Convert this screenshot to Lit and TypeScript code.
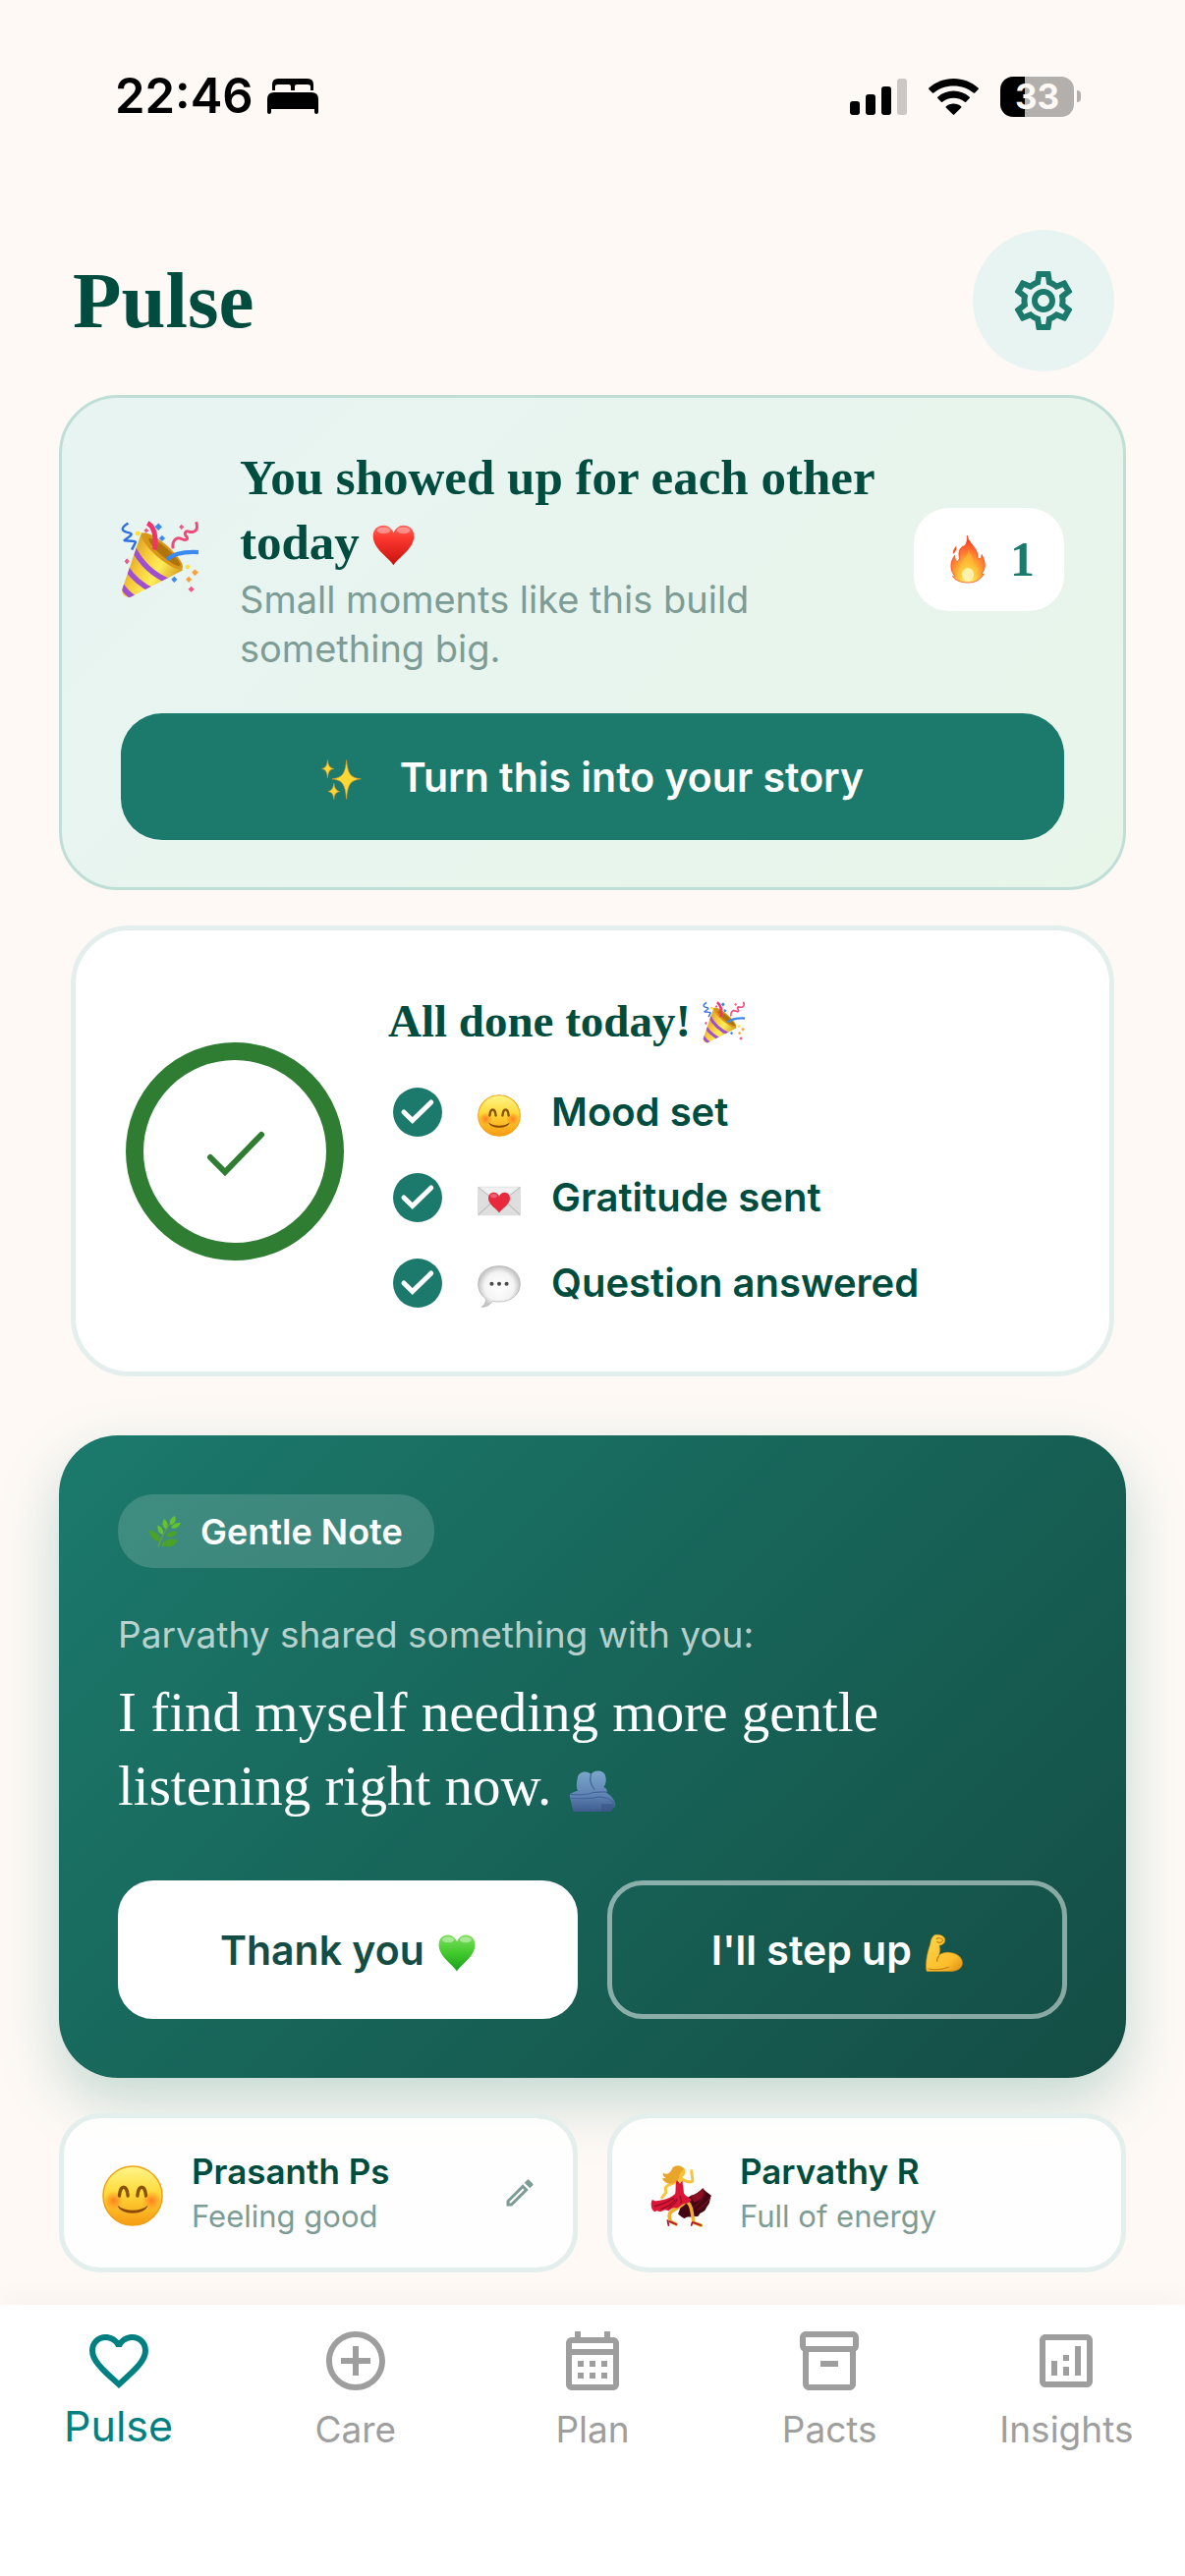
import { LitElement, html, svg, css, type SVGTemplateResult } from "lit";
import { customElement, property } from "lit/decorators.js";
import { classMap } from "lit/directives/class-map.js";

const ICONS: Record<string, SVGTemplateResult> = {
  settings: svg`<path d="M19.43 12.98c.04-.32.07-.64.07-.98 0-.34-.03-.66-.07-.98l2.11-1.65c.19-.15.24-.42.12-.64l-2-3.46c-.09-.16-.26-.25-.44-.25-.06 0-.12.01-.17.03l-2.49 1c-.52-.4-1.08-.73-1.69-.98l-.38-2.65C14.46 2.18 14.25 2 14 2h-4c-.25 0-.46.18-.49.42l-.38 2.65c-.61.25-1.17.59-1.69.98l-2.49-1c-.06-.02-.12-.03-.18-.03-.17 0-.34.09-.43.25l-2 3.46c-.13.22-.07.49.12.64l2.11 1.65c-.04.32-.07.65-.07.98 0 .33.03.66.07.98l-2.11 1.65c-.19.15-.24.42-.12.64l2 3.46c.09.16.26.25.44.25.06 0 .12-.01.17-.03l2.49-1c.52.4 1.08.73 1.69.98l.38 2.65c.03.24.24.42.49.42h4c.25 0 .46-.18.49-.42l.38-2.65c.61-.25 1.17-.59 1.69-.98l2.49 1c.06.02.12.03.18.03.17 0 .34-.09.43-.25l2-3.46c.12-.22.07-.49-.12-.64l-2.11-1.65zm-1.98-1.71c.04.31.05.52.05.73 0 .21-.02.43-.05.73l-.14 1.13.89.7 1.08.84-.7 1.21-1.27-.51-1.04-.42-.9.68c-.43.32-.84.56-1.25.73l-1.06.43-.16 1.13-.2 1.35h-1.4l-.19-1.35-.16-1.13-1.06-.43c-.43-.18-.83-.41-1.23-.71l-.91-.7-1.06.43-1.27.51-.7-1.21 1.08-.84.89-.7-.14-1.13c-.03-.31-.05-.54-.05-.74s.02-.43.05-.73l.14-1.13-.89-.7-1.08-.84.7-1.21 1.27.51 1.04.42.9-.68c.43-.32.84-.56 1.25-.73l1.06-.43.16-1.13.2-1.35h1.39l.19 1.35.16 1.13 1.06.43c.43.18.83.41 1.23.71l.91.7 1.06-.43 1.27-.51.7 1.21-1.07.85-.89.7.14 1.13zM12 8c-2.21 0-4 1.79-4 4s1.79 4 4 4 4-1.79 4-4-1.79-4-4-4zm0 6c-1.1 0-2-.9-2-2s.9-2 2-2 2 .9 2 2-.9 2-2 2z"/>`,
  heart: svg`<path d="M16.5 3c-1.74 0-3.41.81-4.5 2.09C10.91 3.81 9.24 3 7.5 3 4.42 3 2 5.42 2 8.5c0 3.78 3.4 6.86 8.55 11.54L12 21.35l1.45-1.32C18.6 15.36 22 12.28 22 8.5 22 5.42 19.58 3 16.5 3zm-4.4 15.55l-.1.1-.1-.1C7.14 14.24 4 11.39 4 8.5 4 6.5 5.5 5 7.5 5c1.54 0 3.04.99 3.57 2.36h1.87C13.46 5.99 14.96 5 16.5 5c2 0 3.5 1.5 3.5 3.5 0 2.89-3.14 5.74-7.9 10.05z"/>`,
  plus: svg`<path d="M13 7h-2v4H7v2h4v4h2v-4h4v-2h-4V7zm-1-5C6.48 2 2 6.48 2 12s4.48 10 10 10 10-4.48 10-10S17.52 2 12 2zm0 18c-4.41 0-8-3.59-8-8s3.59-8 8-8 8 3.59 8 8-3.59 8-8 8z"/>`,
  calendar: svg`<path d="M19 4h-1V2h-2v2H8V2H6v2H5c-1.11 0-1.99.9-1.99 2L3 20c0 1.1.89 2 2 2h14c1.1 0 2-.9 2-2V6c0-1.1-.9-2-2-2zm0 16H5V10h14v10zm0-12H5V6h14v2zM9 14H7v-2h2v2zm4 0h-2v-2h2v2zm4 0h-2v-2h2v2zm-8 4H7v-2h2v2zm4 0h-2v-2h2v2zm4 0h-2v-2h2v2z"/>`,
  box: svg`<path d="M20 2H4c-1 0-2 .9-2 2v3.01c0 .72.43 1.34 1 1.69V20c0 1.1 1.1 2 2 2h14c.9 0 2-.9 2-2V8.7c.57-.35 1-.97 1-1.69V4c0-1.1-1-2-2-2zm-1 18H5V9h14v11zm1-13H4V4h16v3zM9 12h6v2H9z"/>`,
  chart: svg`<path d="M19 3H5c-1.1 0-2 .9-2 2v14c0 1.1.9 2 2 2h14c1.1 0 2-.9 2-2V5c0-1.1-.9-2-2-2zm0 16H5V5h14v14zM7 12h2v5H7zM15 7h2v10h-2zM11 14h2v3h-2zM11 10h2v2h-2z"/>`,
  pencil: svg`<path d="M14.06 9.02l.92.92L5.92 19H5v-.92l9.06-9.06M17.66 3c-.25 0-.51.1-.7.29l-1.83 1.83 3.75 3.75 1.83-1.83c.39-.39.39-1.02 0-1.41l-2.34-2.34c-.2-.2-.45-.29-.71-.29zm-3.6 3.19L3 17.25V21h3.75L17.81 9.94l-3.75-3.75z"/>`,
  done: svg`<circle cx="12" cy="12" r="10"/><path d="M6.4 12l3.5 3.4 7.6-7.4" fill="none" stroke="#fff" stroke-width="2" stroke-linecap="round" stroke-linejoin="miter"/>`,
};

const EMOJI: Record<string, { label: string; art: SVGTemplateResult }> = {
  party: {
    label: "party popper",
    art: svg`
      <defs>
        <linearGradient id="cone" x1="0" y1=".2" x2="1" y2=".8"><stop offset="0" stop-color="#c98a12"/><stop offset=".35" stop-color="#f7c83a"/><stop offset=".6" stop-color="#ffee58"/><stop offset="1" stop-color="#c98412"/></linearGradient>
        <clipPath id="coneClip"><path d="M17 10L1 57Q1 64 8 63L51 41Q44 20 17 10z"/></clipPath>
      </defs>
      <path d="M17 10L1 57Q1 64 8 63L51 41Q44 20 17 10z" fill="url(#cone)"/>
      <g clip-path="url(#coneClip)" fill="none" stroke="#a04fd0" stroke-width="4.5">
        <path d="M10 22Q20 42 40 50M4 38Q12 51 27 58M-1 51Q4 60 13 65"/>
      </g>
      <ellipse cx="34" cy="25" rx="22" ry="6" transform="rotate(41 34 25)" fill="#d9971a"/>
      <ellipse cx="36" cy="26" rx="17" ry="3.500" transform="rotate(41 36 26)" fill="#b0740c"/>
      <path d="M22 2Q30 6 28 24" fill="none" stroke="#f0356d" stroke-width="4"/>
      <path d="M38 32Q46 25 64 26" fill="none" stroke="#3b8af2" stroke-width="3.500"/>
      <path d="M6 2C-2 7 2 9 7 10S4 15 3 16s10 0 9 2-2 4-3 6" fill="none" stroke="#2f6fe4" stroke-width="2"/>
      <path d="M62 1c3 8-3 9-6 8s-4 2-2 4 0 4-4 2-8 1-7 8" fill="none" stroke="#f04a7c" stroke-width="2.400"/>
      <g fill="#3b8af2"><path d="M31 2l3 3-3 3-3-3zM34 12l2.500 2.500L34 17l-2.500-2.500zM44 46l2.500 2.500L44 51l-2.500-2.500z"/></g>
      <g fill="#f0568c"><path d="M50 3l2 2-2 2.500L48 5zM21 6l2 2-2 2-2-2zM5 31l2 2.500L5 36l-2-2.500zM58 54l2.500 2.500L58 59l-2.500-2.500z"/></g>
      <g fill="#f9a03f"><path d="M61 40l3 2.500-3 3-2.500-3zM56 46l2.500 2.500L56 51l-2.500-2.500z"/></g>
      <circle cx="14" cy="10.500" r="2" fill="#ffe032"/><circle cx="55" cy="38" r="1.800" fill="#ffe032"/>`,
  },
  heart: {
    label: "red heart",
    art: svg`
      <defs><linearGradient id="redHeart" x1="0" y1="0" x2="0" y2="1"><stop offset="0" stop-color="#ff6a60"/><stop offset=".3" stop-color="#fb3a30"/><stop offset="1" stop-color="#c8100c"/></linearGradient></defs>
      <path d="M32 63C26 52 1 38 1 18 1 7 8 1 17 1c7 0 12 5 15 11C35 6 40 1 47 1c9 0 16 6 16 17 0 20-25 34-31 45z" fill="url(#redHeart)"/>
      <ellipse cx="17" cy="9" rx="10" ry="5" fill="#fff" opacity=".35"/><ellipse cx="47" cy="9" rx="10" ry="5" fill="#fff" opacity=".35"/>`,
  },
  greenHeart: {
    label: "green heart",
    art: svg`
      <defs><linearGradient id="greenHeart" x1="0" y1="0" x2="0" y2="1"><stop offset="0" stop-color="#7be05c"/><stop offset=".5" stop-color="#43c92c"/><stop offset="1" stop-color="#16a01c"/></linearGradient></defs>
      <path d="M32 63C26 52 1 38 1 18 1 7 8 1 17 1c7 0 12 5 15 11C35 6 40 1 47 1c9 0 16 6 16 17 0 20-25 34-31 45z" fill="url(#greenHeart)"/>
      <ellipse cx="17" cy="9" rx="10" ry="5" fill="#fff" opacity=".4"/><ellipse cx="47" cy="9" rx="10" ry="5" fill="#fff" opacity=".4"/>`,
  },
  sparkles: {
    label: "sparkles",
    art: svg`
      <g fill="#fdd835" stroke="#e8962a" stroke-width="1">
        <path d="M40 1c2 20 5 28 23 30-18 2-21 10-23 32-2-22-5-30-23-32 18-2 21-10 23-30z"/>
        <path d="M10 1c1 9 3 12 10 14-7 1-9 5-10 14C9 20 7 16 1 15c6-2 8-5 9-14z"/>
        <path d="M20 38c1 8 3 11 9 13-6 1-8 4-9 12-1-8-3-11-9-12 6-2 8-5 9-13z"/>
      </g>`,
  },
  fire: {
    label: "fire",
    art: svg`
      <defs><radialGradient id="flame" cx=".5" cy=".9" r=".85"><stop offset="0" stop-color="#fff7c8"/><stop offset=".2" stop-color="#ffe14a"/><stop offset=".5" stop-color="#ff9a32"/><stop offset=".8" stop-color="#ff5a2c"/><stop offset="1" stop-color="#f2331c"/></radialGradient></defs>
      <path d="M31 0c1 10 15 17 14 31 3 2 5-1 5-5 5 10 6 18 0 26 1 1 2 1 3 0-5 9-12 12-21 12s-17-3-20-9c1 1 2 1 3 0-7-8-6-20 0-28 0 5 1 9 4 8 5-3-3-13 6-20 4 0 7-6 6-15z" fill="url(#flame)" stroke="#f6441f" stroke-width="1"/>
      <path d="M32 16c1 8 9 13 7 24 0 6 4 5 6 3-1 12-5 18-13 18s-14-6-13-17c6 3 4-8 7-12 5-4 7-8 6-16z" fill="#ffc233" opacity=".55"/>
      <ellipse cx="32" cy="53" rx="8" ry="9" fill="#fff9c4" opacity=".8"/>
      <path d="M17 14c1 5-1 8-4 11-1-5 2-8 4-11z" fill="#f2512c"/>`,
  },
  smile: {
    label: "smiling face",
    art: svg`
      <defs>
        <linearGradient id="face" x1="0" y1="0" x2="0" y2="1"><stop offset="0" stop-color="#fff68a"/><stop offset=".45" stop-color="#ffd93a"/><stop offset="1" stop-color="#f79a12"/></linearGradient>
        <radialGradient id="cheek"><stop offset="0" stop-color="#ff6a1c" stop-opacity=".8"/><stop offset="1" stop-color="#ff7a1c" stop-opacity="0"/></radialGradient>
      </defs>
      <circle cx="32" cy="32" r="31" fill="url(#face)" stroke="#f0a010" stroke-width="1.500"/>
      <circle cx="12" cy="37" r="10" fill="url(#cheek)"/><circle cx="52" cy="37" r="10" fill="url(#cheek)"/>
      <path d="M18 32c1-12 8-12 9 0M37 32c1-12 8-12 9 0" fill="none" stroke="#8a5200" stroke-width="3.500" stroke-linecap="round"/>
      <path d="M16 42c8 7 24 7 32 0-3 11-29 11-32 0z" fill="#8a4b00"/>`,
  },
  letter: {
    label: "love letter",
    art: svg`
      <rect x="0" y="10" width="64" height="44" rx="2" fill="#dedede"/>
      <path d="M0 11l32 24 32-24z" fill="#f0f0f0"/>
      <path d="M1 53l24-23M63 53L39 30M1 11l27 22M63 11L36 33" stroke="#bcbcbc" stroke-width="1.500" fill="none"/>
      <path d="M32 50c-3-6-16-12-16-22 0-6 4-9 8-9s7 3 8 6c1-3 4-6 8-6s8 3 8 9c0 10-13 16-16 22z" fill="#e8283c"/>
      <ellipse cx="24" cy="24" rx="5" ry="3" fill="#fff" opacity=".25"/>`,
  },
  bubble: {
    label: "speech balloon",
    art: svg`
      <defs><radialGradient id="balloon"><stop offset="0" stop-color="#fff"/><stop offset=".7" stop-color="#f4f4f4"/><stop offset="1" stop-color="#c4c4c4"/></radialGradient></defs>
      <path d="M32 1c18 0 31 11 31 27S50 55 32 55c-4 0-7 0-10-1-3 6-9 9-16 9 5-4 7-8 6-13C5 45 1 38 1 28 1 12 14 1 32 1z" fill="url(#balloon)" stroke="#b4b4b4" stroke-width="1.200"/>
      <g fill="#4a4a4a"><circle cx="21" cy="28" r="3"/><circle cx="32" cy="28" r="3"/><circle cx="43" cy="28" r="3"/></g>`,
  },
  herb: {
    label: "herb",
    art: svg`
      <path d="M18 63C24 44 34 26 48 6" fill="none" stroke="#6aa42a" stroke-width="2.500"/>
      <g fill="#64c42c">
        <path d="M52 0c3 8 1 15-8 19-5-8 0-15 8-19zM64 14c-5 11-12 13-20 10 4-8 11-11 20-10zM30 6c8 6 9 13 4 21-8-6-9-13-4-21zM17 19c10 4 12 11 11 19-10-3-12-10-11-19z"/>
      </g>
      <g fill="#4aa326">
        <path d="M57 32c-5 11-14 13-23 9 5-9 13-12 23-9zM0 29c14 2 21 10 22 23C8 51 1 42 0 29zM58 50c-7 13-20 15-34 10 6-12 20-17 34-10z"/>
      </g>`,
  },
  hug: {
    label: "people hugging",
    art: svg`
      <defs><linearGradient id="hug" x1="0" y1="0" x2="0" y2="1"><stop offset="0" stop-color="#7ba6cc"/><stop offset=".6" stop-color="#5f83b4"/><stop offset="1" stop-color="#3d5c8e"/></linearGradient></defs>
      <path d="M12 32c-3-7-1-16 0-22C14 1 26 0 30 6c4-7 16-7 19 1 2 6 2 14-2 19 6 3 5 7 4 9 7 4 11 11 12 17 0 4-1 6-4 7l-2 5H6L1 40c0-4 5-7 11-8z" fill="url(#hug)"/>
      <path d="M30 6c-2 7-1 16 5 24M1 37c12 1 22 2 33-3 8 0 18-2 17 1M2 43c16 1 30 1 38-2 9 0 18 4 22 11M23 56c4-5 6 4 9 4s4-3 6-5" fill="none" stroke="#45689c" stroke-width="1.800"/>
      <path d="M44 52h18l-3 8-2 4H44z" fill="#3a5788" opacity=".7"/>`,
  },
  bicep: {
    label: "flexed biceps",
    art: svg`
      <defs><linearGradient id="arm" x1="0" y1="0" x2="1" y2="1"><stop offset="0" stop-color="#ffd54a"/><stop offset=".7" stop-color="#fbbd2c"/><stop offset="1" stop-color="#e08a10"/></linearGradient></defs>
      <path d="M16 1c7-2 14 1 17 6 1 5-1 9-6 11-3 0-4 1-3 4 1 6 0 11-2 15 4-5 12-7 20-6 12 1 21 9 21 18 0 9-9 14-19 14H2c-3-9 0-30 6-46 1-7 3-14 8-16z" fill="url(#arm)" stroke="#dc930f" stroke-width="1"/>
      <path d="M18 8c4-3 10-2 12 2-3 5-8 5-11 2M23 37c-3 3-4 7-3 10M4 59c12 2 26 1 36-3" fill="none" stroke="#c97c0a" stroke-width="2"/>`,
  },
  dancer: {
    label: "woman dancing",
    art: svg`
      <path d="M42 32c5-1 9-4 13-8 2 3 6 5 9 8-2 2-1 4-2 7s-3 4-4 7-5 3-7 6-4 1-7 2-5-1-7 1-4-1-8-4l5-13z" fill="#430612"/>
      <path d="M42 32c5-1 9-4 13-8 2 4 1 7-1 10s-5 3-8 5z" fill="#8c0d22"/>
      <path d="M58 28c-3 7-7 12-12 16M63 34c-5 6-9 10-14 13" fill="none" stroke="#7b0b1d" stroke-width="1.200"/>
      <path d="M35 40c-5 5-12 6-15 11-1 3 1 6 1 8l6 3M39 39c5 3 4 11 6 18v3l8 3" fill="none" stroke="#f2b02a" stroke-width="3.600" stroke-linecap="round" stroke-linejoin="round"/>
      <path d="M27 14l4 5 3-4c-1 5 1 8 1 14 1 3 5 4 8 7-1 2-4 4-7 4-4 1-6 5-9 5-3-1-6 1-8 3-3-2-5-1-7 0-2 2-4-1-6 0-2 2-4-1-5-4 0-3-1-5 1-8 4 3 8 0 12 0 4-1 9-3 12-6 1-6 0-10 1-16z" fill="#dc1636"/>
      <path d="M4 43c8-2 14-4 21-9M11 46c7-2 11-5 15-10M19 45c5-3 8-6 9-10M32 40c1-3 0-5-1-8" fill="none" stroke="#930b23" stroke-width="1.300"/>
      <path d="M25 18c-3 2-7 2-9 5-1 3 1 4 0 6l-4 5M34 15c3 2 7 3 10 2 1-3-1-6-1-11" fill="none" stroke="#fcc33a" stroke-width="3" stroke-linecap="round" stroke-linejoin="round"/>
      <path d="M30 9l4 3v3l-3 4-4-5z" fill="#fcc33a"/><ellipse cx="33" cy="7" rx="3.500" ry="5" fill="#fcc33a"/>
      <path d="M35 4C33-1 24-1 22 5c-2 4-5 5-9 3 0 3 1 4 3 5-2 1-3 1-4 0 2 5 6 7 10 6 4 0 7-3 8-6 0-4 2-6 5-9z" fill="#e9a52a"/>
      <path d="M18 58l1 5M20 59l7 3M44 60l-1 3M45 60l8 3" stroke="#b01530" stroke-width="1.800" fill="none" stroke-linecap="round"/>`,
  },
};

const icon = (name: string) =>
  html`<svg class="icon" viewBox="0 0 24 24" fill="currentColor" aria-hidden="true">${ICONS[name]}</svg>`;

const emoji = (name: string) =>
  html`<svg class="emoji" viewBox="0 0 64 64" preserveAspectRatio="none" role="img" aria-label=${EMOJI[name].label}>${EMOJI[name].art}</svg>`;

const glyphs = css`
  .icon,
  .emoji {
    display: block;
    flex: none;
    overflow: visible;
  }
`;

const reset = css`
  * {
    box-sizing: border-box;
    margin: 0;
  }
  button {
    border: 0;
    padding: 0;
    background: none;
    color: inherit;
    font: inherit;
    cursor: pointer;
  }
`;

@customElement("status-bar")
class StatusBar extends LitElement {
  static styles = [
    reset,
    css`
      .bar {
        display: flex;
        align-items: center;
        justify-content: space-between;
        padding: 68px 106px 0 117px;
        color: #000;
      }
      .group {
        display: flex;
        align-items: center;
        gap: 22px;
        height: 60px;
      }
      .clock {
        gap: 14px;
        font-size: 49px;
        line-height: 60px;
        font-weight: 600;
      }
      .battery {
        display: flex;
        align-items: center;
        gap: 3px;
      }
      .cell {
        display: grid;
        place-items: center;
        width: 75px;
        height: 41px;
        border-radius: 13px;
        background: linear-gradient(90deg, #000 33%, #b3afac 33%);
        color: #fef9f5;
        font-size: 35px;
        line-height: 41px;
        font-weight: 700;
      }
      .nub {
        width: 4px;
        height: 12px;
        border-radius: 0 4px 4px 0;
        background: #b3afac;
      }
    `,
  ];

  render() {
    return html`
      <div class="bar">
        <div class="group clock">
          <time>22:46</time>
          <svg width="52" height="36" viewBox="0 0 52 36" role="img" aria-label="Sleep focus">
            <path d="M5 12V6Q5 0 11 0h30q6 0 6 6v6h-3V8q0-2-3-2H30q-2 0-2 2v4h-4V8q0-2-2-2H11q-3 0-3 2v4z" />
            <path d="M7 14h38q7 0 7 7v13q0 2-2 2t-2-2v-3H4v3q0 2-2 2t-2-2V21q0-7 7-7z" />
          </svg>
        </div>
        <div class="group">
          <svg width="58" height="38" viewBox="0 0 58 38" role="img" aria-label="Signal, three of four bars">
            <rect x="0" y="24" width="10" height="14" rx="3" />
            <rect x="16" y="17" width="10" height="21" rx="3" />
            <rect x="32" y="9" width="10" height="29" rx="3" />
            <rect x="48" y="1" width="10" height="37" rx="3" fill="#cbc7c4" />
          </svg>
          <svg width="51" height="37" viewBox="0 0 51 37" role="img" aria-label="Wi-Fi">
            <path d="M25.500 0C35.500 0 44 3.600 50.600 9.600q.7.7 0 1.400l-3.500 3.500q-.7.7-1.400 0C40.200 9.700 33.300 7.400 25.500 7.400S10.800 9.700 5.300 14.500q-.7.7-1.400 0L.4 11q-.7-.7 0-1.400C7 3.600 15.500 0 25.500 0z" />
            <path d="M25.500 12.500c6.300 0 11.800 2.300 16.200 6.200q.7.700 0 1.400l-3.600 3.600q-.6.600-1.300 0c-3.100-2.600-7-4-11.300-4s-8.200 1.400-11.300 4q-.7.600-1.300 0l-3.600-3.600q-.7-.7 0-1.400c4.400-3.900 9.900-6.200 16.200-6.200z" />
            <path d="M25.500 25.500c3 0 5.500 1 7.600 2.800q.7.700 0 1.400l-6.900 6.900q-.7.700-1.400 0L17.900 29.700q-.7-.7 0-1.400c2.100-1.800 4.600-2.800 7.600-2.800z" />
          </svg>
          <div class="battery">
            <span class="cell">33</span>
            <span class="nub"></span>
          </div>
        </div>
      </div>
    `;
  }
}

@customElement("mood-card")
class MoodCard extends LitElement {
  @property() name = "";
  @property() mood = "";
  @property() face = "smile";
  @property({ type: Boolean }) editable = false;

  static styles = [
    reset,
    glyphs,
    css`
      :host {
        display: block;
        flex: 1;
        min-width: 0;
      }
      .card {
        display: flex;
        align-items: center;
        gap: 29px;
        min-height: 162px;
        padding: 24px 36px 24px 39px;
        border: 5px solid #e3efec;
        border-radius: 42px;
        background: rgba(255, 255, 255, 0.86);
        background-clip: padding-box;
      }
      .emoji {
        width: 62px;
        height: 62px;
        margin-top: 6px;
      }
      .who {
        flex: 1;
        min-width: 0;
      }
      .name {
        color: #004d40;
        font-size: 35px;
        line-height: 48px;
        font-weight: 600;
      }
      .mood {
        color: #7d9c95;
        font-size: 31px;
        line-height: 44px;
      }
      .edit {
        color: #7d9c95;
      }
      .icon {
        width: 36px;
        height: 36px;
      }
    `,
  ];

  render() {
    return html`
      <div class="card">
        ${emoji(this.face)}
        <div class="who">
          <p class="name">${this.name}</p>
          <p class="mood">${this.mood}</p>
        </div>
        ${this.editable
          ? html`<button class="edit" type="button" aria-label="Edit mood">${icon("pencil")}</button>`
          : null}
      </div>
    `;
  }
}

@customElement("tab-bar")
class TabBar extends LitElement {
  @property() active = "Pulse";

  private tabs = [
    { name: "Pulse", icon: "heart" },
    { name: "Care", icon: "plus" },
    { name: "Plan", icon: "calendar" },
    { name: "Pacts", icon: "box" },
    { name: "Insights", icon: "chart" },
  ];

  static styles = [
    reset,
    glyphs,
    css`
      :host {
        display: block;
        flex: 1;
        background: #fff;
        box-shadow: 0 -6px 30px rgba(0, 0, 0, 0.03);
      }
      .tabs {
        display: grid;
        grid-template-columns: repeat(5, 1fr);
        padding: 21px 0 96px;
      }
      .tab {
        display: flex;
        flex-direction: column;
        align-items: center;
        justify-content: space-between;
        height: 127px;
        color: #9e9e9e;
        font-size: 37px;
        line-height: 43px;
        text-decoration: none;
      }
      .tab.active {
        color: #008080;
        font-size: 43px;
        line-height: 50px;
      }
      .icon {
        width: 72px;
        height: 72px;
      }
    `,
  ];

  render() {
    return html`
      <nav class="tabs" aria-label="Main">
        ${this.tabs.map(
          (t) => html`
            <a class=${classMap({ tab: true, active: t.name === this.active })} href="#${t.name.toLowerCase()}">
              ${icon(t.icon)}
              <span>${t.name}</span>
            </a>
          `,
        )}
      </nav>
    `;
  }
}

@customElement("app-root")
class AppRoot extends LitElement {
  private tasks = [
    { face: "smile", label: "Mood set" },
    { face: "letter", label: "Gratitude sent" },
    { face: "bubble", label: "Question answered" },
  ];

  static styles = [
    reset,
    glyphs,
    css`
      :host {
        display: flex;
        flex-direction: column;
        min-height: 100vh;
        background: #fef9f5;
        font-family: Inter, "Liberation Sans", sans-serif;
        color: #004d40;
      }
      h1,
      h2,
      .quote,
      .count {
        font-family: "Liberation Serif", serif;
      }
      .header {
        display: flex;
        align-items: center;
        justify-content: space-between;
        padding: 106px 72px 24px 74px;
      }
      h1 {
        font-size: 81px;
        line-height: 96px;
        font-weight: 700;
      }
      .settings {
        display: grid;
        place-items: center;
        width: 144px;
        height: 144px;
        border-radius: 50%;
        background: #e8f4f2;
        color: #1b7a6c;
      }
      .settings .icon {
        width: 72px;
        height: 72px;
      }
      main {
        display: flex;
        flex-direction: column;
        gap: 36px;
        padding: 0 60px 33px;
      }
      h2 {
        font-weight: 700;
      }
      h2 .emoji,
      .quote .emoji,
      .action .emoji {
        display: inline-block;
        vertical-align: -7px;
      }
      .quote .emoji,
      .action .emoji {
        margin-left: 4px;
      }

      .story {
        display: flex;
        flex-direction: column;
        gap: 41px;
        padding: 48px 60px;
        border: 3px solid #bfdfd6;
        border-radius: 60px;
        background: linear-gradient(135deg, #e8f4f2, #e8f5e9);
      }
      .summary {
        display: flex;
        align-items: center;
        gap: 24px;
      }
      .summary > .emoji {
        width: 79px;
        height: 79px;
        margin-right: 18px;
      }
      .words {
        flex: 1;
      }
      .words h2 {
        font-size: 51px;
        line-height: 66px;
      }
      .words h2 .emoji {
        width: 43px;
        height: 42px;
      }
      .hint {
        color: #7d9c95;
        font-size: 38px;
        line-height: 50px;
      }
      .streak {
        display: flex;
        align-items: center;
        gap: 18px;
        height: 105px;
        padding: 0 30px;
        border-radius: 36px;
        background: #fff;
        color: #1b7a6c;
      }
      .streak .emoji {
        width: 50px;
        height: 48px;
      }
      .count {
        font-size: 50px;
        line-height: 60px;
        font-weight: 700;
      }
      .primary {
        display: flex;
        align-items: center;
        justify-content: center;
        gap: 39px;
        height: 129px;
        border-radius: 42px;
        background: #1b7a6c;
        color: #fff;
        font-size: 41px;
        line-height: 54px;
        font-weight: 600;
      }
      .primary .emoji {
        width: 41px;
        height: 41px;
      }
      .primary .emoji,
      .task .emoji {
        margin-top: 6px;
      }

      .today {
        display: flex;
        align-items: center;
        gap: 45px;
        margin: 0 12px;
        padding: 60px 51px;
        border: 5px solid #e3efec;
        border-radius: 60px;
        background: #fff;
      }
      .ring {
        flex: none;
        width: 222px;
        height: 222px;
      }
      .today h2 {
        margin-bottom: 30px;
        font-size: 47px;
        line-height: 65px;
      }
      .today h2 .emoji {
        width: 43px;
        height: 43px;
      }
      .tasks {
        display: flex;
        flex-direction: column;
        gap: 27px;
        padding: 0;
        list-style: none;
      }
      .task {
        display: flex;
        align-items: center;
        gap: 31px;
        font-size: 40px;
        line-height: 60px;
        font-weight: 600;
      }
      .task .icon {
        width: 60px;
        height: 60px;
        color: #1b7a6c;
      }
      .task .emoji {
        width: 44px;
        height: 43px;
      }

      .note {
        display: flex;
        flex-direction: column;
        align-items: flex-start;
        margin-top: 24px;
        padding: 60px;
        border-radius: 60px;
        background: linear-gradient(135deg, #1b7a6c, #144d44);
        box-shadow: 0 24px 60px rgba(27, 122, 108, 0.26);
        color: #fff;
      }
      .chip {
        display: flex;
        align-items: center;
        gap: 20px;
        height: 75px;
        margin-bottom: 42px;
        padding: 0 32px;
        border-radius: 36px;
        background: rgba(255, 255, 255, 0.16);
        font-size: 36px;
        line-height: 48px;
        font-weight: 600;
      }
      .chip .emoji {
        width: 32px;
        height: 32px;
      }
      .from {
        margin-bottom: 16px;
        color: rgba(255, 255, 255, 0.7);
        font-size: 37px;
        line-height: 51px;
      }
      .quote {
        margin-bottom: 59px;
        font-size: 57px;
        line-height: 75px;
      }
      .quote .emoji {
        width: 48px;
        height: 42px;
      }
      .actions {
        display: flex;
        gap: 30px;
        width: 100%;
      }
      .action {
        flex: 1;
        height: 141px;
        border: 5px solid rgba(255, 255, 255, 0.5);
        border-radius: 36px;
        font-size: 41px;
        line-height: 54px;
        font-weight: 600;
      }
      .action.solid {
        border-color: #fff;
        background: #fff;
        color: #144d44;
      }
      .action .emoji {
        width: 38px;
        height: 38px;
      }

      .moods {
        display: flex;
        gap: 30px;
      }
    `,
  ];

  render() {
    return html`
      <status-bar></status-bar>
      <header class="header">
        <h1>Pulse</h1>
        <button class="settings" type="button" aria-label="Settings">${icon("settings")}</button>
      </header>
      <main>
        <section class="story">
          <div class="summary">
            ${emoji("party")}
            <div class="words">
              <h2>You showed up for each other today ${emoji("heart")}</h2>
              <p class="hint">Small moments like this build something big.</p>
            </div>
            <div class="streak">${emoji("fire")}<span class="count">1</span></div>
          </div>
          <button class="primary" type="button">${emoji("sparkles")}<span>Turn this into your story</span></button>
        </section>

        <section class="today">
          <svg class="ring" viewBox="0 0 222 222" fill="none" stroke="#2e7d32" role="img" aria-label="Complete">
            <circle cx="111" cy="111" r="102" stroke-width="18" />
            <path d="M86 117l15 15 37-38" stroke-width="6" stroke-linecap="round" />
          </svg>
          <div>
            <h2>All done today! ${emoji("party")}</h2>
            <ul class="tasks">
              ${this.tasks.map((t) => html`<li class="task">${icon("done")}${emoji(t.face)}<span>${t.label}</span></li>`)}
            </ul>
          </div>
        </section>

        <section class="note">
          <div class="chip">${emoji("herb")}<span>Gentle Note</span></div>
          <p class="from">Parvathy shared something with you:</p>
          <p class="quote">I find myself needing more gentle listening right now. ${emoji("hug")}</p>
          <div class="actions">
            <button class="action solid" type="button">Thank you ${emoji("greenHeart")}</button>
            <button class="action" type="button">I'll step up ${emoji("bicep")}</button>
          </div>
        </section>

        <section class="moods">
          <mood-card name="Prasanth Ps" mood="Feeling good" face="smile" editable></mood-card>
          <mood-card name="Parvathy R" mood="Full of energy" face="dancer"></mood-card>
        </section>
      </main>
      <tab-bar active="Pulse"></tab-bar>
    `;
  }
}
